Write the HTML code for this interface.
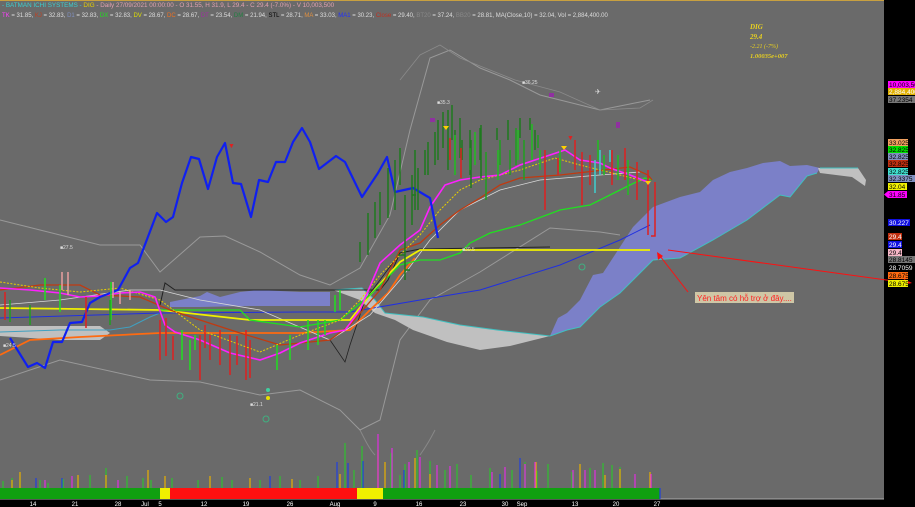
<!DOCTYPE html>
<html><head><meta charset="utf-8"><style>
html,body{margin:0;padding:0;background:#6a6a6a;width:915px;height:507px;overflow:hidden}
svg{display:block;font-family:"Liberation Sans",sans-serif}
</style></head><body>
<svg width="915" height="507" viewBox="0 0 915 507" xmlns="http://www.w3.org/2000/svg">
<rect width="915" height="507" fill="#6a6a6a"/>
<line x1="0" y1="0.5" x2="884" y2="0.5" stroke="#c8a040" stroke-width="1"/>
<rect x="884" y="0" width="31" height="507" fill="#000"/>
<rect x="0" y="499" width="884" height="8" fill="#000"/>
<line x1="0" y1="499" x2="884" y2="499" stroke="#aaa" stroke-width="1"/>

<text x="2" y="7" font-size="6.3"><tspan fill="#3ad0d0">- BATMAN  ICHI SYSTEMS - </tspan><tspan fill="#e8d000">DIG</tspan><tspan fill="#e0a0b0"> - Daily 27/09/2021 00:00:00 - O 31.55, H 31.9, L 29.4 - C 29.4 (-7.0%) - V 10,003,500</tspan></text>
<text x="2" y="17" font-size="6"><tspan fill="#ff40ff">TK</tspan><tspan fill="#ddd"> = 31.85, </tspan><tspan fill="#c04020">KJ</tspan><tspan fill="#ddd"> = 32.83, </tspan><tspan fill="#8090c0">D1</tspan><tspan fill="#ddd"> = 32.83, </tspan><tspan fill="#20e020">DX</tspan><tspan fill="#ddd"> = 32.83, </tspan><tspan fill="#e0e000">DV</tspan><tspan fill="#ddd"> = 28.67, </tspan><tspan fill="#f07020">DC</tspan><tspan fill="#ddd"> = 28.67, </tspan><tspan fill="#a030a0">DT</tspan><tspan fill="#ddd"> = 23.54, </tspan><tspan fill="#208040">DM</tspan><tspan fill="#ddd"> = 21.94, </tspan><tspan fill="#000">STL</tspan><tspan fill="#ddd"> = 28.71, </tspan><tspan fill="#e09040">MA</tspan><tspan fill="#ddd"> = 33.03, </tspan><tspan fill="#2030ff">MA1</tspan><tspan fill="#ddd"> = 30.23, </tspan><tspan fill="#c03020">Close</tspan><tspan fill="#ddd"> = 29.40, </tspan><tspan fill="#888">BT20</tspan><tspan fill="#ddd"> = 37.24, </tspan><tspan fill="#888">BB20</tspan><tspan fill="#ddd"> = 28.81, MA(Close,10) = 32.04, Vol = 2,884,400.00</tspan></text>

<g font-family="Liberation Serif,serif" font-style="italic" font-weight="bold" font-size="7" fill="#e8d020">
<text x="750" y="29">DIG</text><text x="750" y="39">29.4</text>
<text x="750" y="48" font-weight="normal" font-size="6">-2.21 (-7%)</text><text x="750" y="58" font-size="6.5">1.00035e+007</text></g>

<rect x="0" y="488" width="660" height="11" fill="#10a010"/>
<rect x="167" y="488" width="190" height="11" fill="#ff1010"/>
<rect x="160" y="488" width="10" height="11" fill="#f0f000"/>
<rect x="357" y="488" width="26" height="11" fill="#f0f000"/>
<g stroke-width="1.2">
<path d="M3 488V481M12 488V478M20 488V479M40 488V480M48 488V483M63 488V479M78 488V481M90 488V475M106 488V468M127 488V476M143 488V478M151 488V480M172 488V478M198 488V480M222 488V477M232 488V480M260 488V480M280 488V476M300 488V480M318 488V476M345 488V443M354 488V470M362 488V446M391 488V453M400 488V475M405 488V464M417 488V450M430 488V461M445 488V470M457 488V464M471 488V475M490 488V468M512 488V470M525 488V462M537 488V471M548 488V464M572 488V472M590 488V468M603 488V463M612 488V465M620 488V467" stroke="#30c030"/>
<path d="M12 488V480M20 488V472M78 488V475M106 488V475M148 488V470M165 488V476M210 488V476M250 488V478M292 488V479M340 488V474M378 488V450M385 488V462M415 488V458M430 488V474M536 488V462M580 488V464M605 488V475M620 488V469M650 488V472" stroke="#e8b000"/>
<path d="M36 488V478M62 488V478M270 488V476M337 488V462M348 488V463M363 488V461M404 488V470M500 488V474M520 488V458M660 488V499" stroke="#2040e0"/>
<path d="M45 488V480M72 488V476M118 488V480M378 488V434M392 488V448M409 488V462M420 488V457M437 488V465M450 488V466M492 488V472M505 488V467M525 488V464M535 488V462M573 488V470M585 488V470M595 488V470M635 488V474M651 488V474" stroke="#e030e0"/>
</g>
<path d="M360 430C365 440 370 450 375 455M435 430C430 440 425 448 420 455" stroke="#888" fill="none"/>

<g fill="#fff" font-size="6" text-anchor="middle">
<text x="33" y="506">14</text><text x="75" y="506">21</text><text x="118" y="506">28</text><text x="145" y="506">Jul</text><text x="160" y="506">5</text><text x="204" y="506">12</text><text x="246" y="506">19</text><text x="290" y="506">26</text><text x="335" y="506">Aug</text><text x="375" y="506">9</text><text x="419" y="506">16</text><text x="463" y="506">23</text><text x="505" y="506">30</text><text x="522" y="506">Sep</text><text x="575" y="506">13</text><text x="616" y="506">20</text><text x="657" y="506">27</text>
</g>

<path d="M0 220L40 230L100 245L140 245L160 272L200 237L225 236L260 252L300 275L330 285L360 268L390 215L410 130L430 58L450 50L480 68L510 80L540 95L560 100L600 110L630 104L650 100" fill="none" stroke="#999" stroke-width="1"/>
<path d="M0 380L60 360L150 380L200 382L260 395L300 390L340 410L360 430L380 420L400 340L430 300L480 272L550 228L600 232L620 235" fill="none" stroke="#999" stroke-width="1"/>
<path d="M400 80L420 55L440 45L460 58L490 70L515 80L560 92L600 110L640 108L653 100" fill="none" stroke="#8a8a8a" stroke-width="0.8"/>

<polygon points="170,302 200,296 207,292 220,297 240,292 258,290 280,291 300,292 330,292 330,306 300,306 250,306 200,307 170,307" fill="#7b80c8"/>
<polygon points="0,326 100,326 110,333 100,340 60,340 0,336" fill="#c0c0c0"/>
<polygon points="333,290 362,288 375,300 385,313 423,317 460,325 497,330 550,336 510,346 480,350 447,342 413,330 395,320 375,313 360,300" fill="#c0c0c0"/>
<polyline points="333,290 362,288 375,300 385,313 423,317 460,325 497,330 550,336" fill="none" stroke="#40c0c0" stroke-width="1"/>
<polygon points="550,336 558,318 567,313 580,300 593,275 603,273 620,247 633,227 653,207 680,197 700,192 713,180 730,172 747,168 763,163 780,161 790,166 807,165 820,168 817,173 807,176 790,197 780,195 747,220 730,230 713,240 680,258 653,260 633,280 620,293 600,307 580,327 567,330" fill="#7b80c8"/>
<polyline points="550,336 567,330 580,327 600,307 620,293 633,280 653,260 680,258 713,240 730,230 747,220 780,195 790,197 807,176 817,173" fill="none" stroke="#40c0c0" stroke-width="1"/>
<polygon points="818,168 858,168 866,180 865,186 852,177 820,173" fill="#c0c0c0"/>
<line x1="820" y1="168" x2="858" y2="168" stroke="#40c0c0"/>
<polyline points="0,332 60,330 110,330 130,327 150,317 160,313" fill="none" stroke="#40a0c0" stroke-width="1"/>

<polyline points="0,318 160,313 300,312 350,312 420,300 480,290 560,265 620,240 650,225" fill="none" stroke="#2030e0" stroke-width="1"/>
<polyline points="160,305 165,283 175,290 380,290 388,280 400,253 420,249 550,247" fill="none" stroke="#222" stroke-width="1"/>
<polyline points="330,340 345,362 350,345 365,300 395,260" fill="none" stroke="#222" stroke-width="0.8"/>
<polyline points="0,355 30,340 80,337 160,333 300,333 350,330 370,310 388,293 400,275 415,258" fill="none" stroke="#ff6a10" stroke-width="1.8"/>
<polyline points="0,305 60,300 130,290 160,290 200,300 260,310 330,340 370,315 400,280 430,240 460,210 500,190 540,180 600,175 640,172" fill="none" stroke="#d8d8d8" stroke-width="0.8"/>
<polyline points="0,308 160,310 250,320 350,320 370,295 400,262 420,250 650,250" fill="none" stroke="#f0f000" stroke-width="1.8"/>
<polyline points="160,310 240,310 250,320 300,327 340,320 370,295 400,265 420,260 440,260 460,253 470,243 490,233 520,225 560,210 590,205 610,195 630,185 645,178 652,180" fill="none" stroke="#20e020" stroke-width="1.3"/>
<polyline points="0,290 40,285 80,285 100,295 140,297 170,310 200,320 240,333 280,345 330,340 350,325 380,290 400,250 420,243 440,225 460,210 480,198 500,185 520,178 560,175 630,167 648,175 652,180" fill="none" stroke="#c03a10" stroke-width="1.3"/>
<polyline points="0,282 40,288 80,292 120,288 160,300 200,330 260,352 300,335 340,320 360,300 380,275 400,255 420,235 440,210 460,190 480,180 520,170 555,158 580,165 620,175 648,182" fill="none" stroke="#e8d000" stroke-width="1" stroke-dasharray="2,1.5"/>
<polyline points="0,288 30,290 60,293 80,297 100,296 120,293 140,292 155,297 165,325 175,332 200,340 230,353 260,360 280,353 300,343 330,333 345,330 360,310 380,263 400,245 420,230 430,207 445,185 460,180 480,177 500,175 520,165 550,155 565,150 580,160 600,163 610,168 630,175 650,183" fill="none" stroke="#ff20ff" stroke-width="1.6"/>

<polyline points="10,338 28,367 37,363 45,368 53,342 62,342 70,323 82,322 90,303 100,297 118,290 130,268 138,263 157,213 166,222 173,217 182,183 191,157 199,159 208,189 217,157 225,143 233,183 241,184 251,217 259,180 268,182 276,162 285,162 293,142 302,128 310,142 319,169 336,156 345,162 362,197 378,173 387,157 395,192 413,188 430,198 438,238" fill="none" stroke="#1020f0" stroke-width="2.2" stroke-linejoin="round"/>

<g stroke-width="1.5" fill="none">
<path d="M405 195V280M398 255H405M405 270H410M412 175V225M412 195H416M418 168V210M428 142V175M435 132V165M443 112V148M452 105V140M460 118V158M471 140V188M481 125V178M497 128V140M508 120V140" stroke="#1e7a1e"/>
<path d="M360 242V262M368 213V255M375 202V238M380 192V225M388 168V218M395 160V210M400 148V185M415 150V210M425 150V175M438 120V160M448 110V170M455 130V160M462 140V160M470 130V175M480 128V160M520 118V138M530 118V130M535 130V150" stroke="#1e7a1e"/>
<path d="M470 148V170M486 152V200M500 140V165M510 150V175M516 128V165M524 140V180M538 135V148" stroke="#20a020"/>
<path d="M455 135V175M475 132V165M498 150V180M518 130V160M532 124V160M540 150V170M560 150V172" stroke="#20c020"/>
<path d="M461 148V178M450 138V160" stroke="#e02020"/>
<path d="M545 150V210M558 158V175M575 140V170M582 152V205M590 155V185M612 150V185M625 148V180M637 162V200M648 170V235M655 182V236H651" stroke="#e02020"/>
<path d="M595 160V193M600 150V175M610 150V162" stroke="#40d0d0"/>
<path d="M598 140V160M604 155V175M618 155V180M628 160V195" stroke="#20c020"/>
<path d="M5 292V320M86 297V328M160 320V360M166 318V356M173 336V360M200 335V380M210 335V360M220 330V365M230 335V375M237 336V365M246 330V380M250 340V378M205 325V348" stroke="#e02020"/>
<path d="M45 278V300M60 285V312M111 282V320M182 330V360M190 340V370M195 335V350M277 345V370M290 335V360M308 320V350M318 320V345M325 320V335M335 295V312M340 290V310" stroke="#20e020"/>
<path d="M62 272V290M68 272V295M113 282V298M120 292V304M130 290V300" stroke="#e8a0a0"/>
<path d="M10 300V322M30 305V325M110 300V325" stroke="#20a020"/>
</g>
<g font-size="5" fill="#ddd">
<text x="60" y="249">■27.5</text><text x="3" y="347">■24.5</text><text x="250" y="406">■21.1</text>
<text x="437" y="104">■35.3</text><text x="522" y="84">■36.25</text><text x="462" y="251">■30.5</text>
</g>
<circle cx="268" cy="390" r="2" fill="#40d0a0"/>
<circle cx="582" cy="267" r="3" fill="none" stroke="#40b080"/>
<circle cx="180" cy="396" r="3" fill="none" stroke="#40b080"/>
<circle cx="266" cy="419" r="3" fill="none" stroke="#40b080"/>
<circle cx="268" cy="398" r="2" fill="#e8e000"/>
<g fill="#ffd000"><path d="M446 130l-3-4h6z"/><path d="M564 150l-3-4h6z"/><path d="M648 185l-3-4h6z"/></g>
<g fill="#9030a0"><path d="M430 118h5v4h-5zM549 93h5v4h-5zM616 122h4v6h-4z"/></g>
<text x="567" y="140" fill="#e02020" font-size="7">▼</text>
<text x="228" y="148" fill="#e02020" font-size="7">▼</text>
<text x="595" y="94" fill="#ddd" font-size="7">✈</text>

<line x1="668" y1="250" x2="908" y2="283" stroke="#ff1010" stroke-width="1"/>
<path d="M912 283l-8 -4 -1 6z" fill="#ff1010"/>
<line x1="688" y1="292" x2="660" y2="256" stroke="#ff1010" stroke-width="1"/>
<path d="M657 252l1 8 5-4z" fill="#ff1010"/>
<rect x="695" y="292" width="99" height="11" fill="#cfc7a6"/>
<text x="697" y="301" fill="#ff2020" font-size="8">Yên tâm có hỗ trợ ở đây....</text>

<g font-size="6.5">
<rect x="888" y="81" width="27" height="7" fill="#ff00ff"/><text x="889" y="87" fill="#000">10,003,50</text>
<rect x="888" y="88" width="27" height="7" fill="#e0b000"/><text x="889" y="94" fill="#fff">2,884,400</text>
<rect x="888" y="96" width="27" height="7" fill="#777"/><text x="889" y="102" fill="#000">37.2354</text>
<rect x="888" y="139" width="20" height="7" fill="#f0a060"/><text x="889" y="145" fill="#000">33.025</text>
<rect x="888" y="146" width="20" height="7" fill="#00e000"/><text x="889" y="152" fill="#000">32.825</text>
<rect x="888" y="153" width="20" height="7" fill="#8090c0"/><text x="889" y="159" fill="#000">32.825</text>
<rect x="888" y="160" width="20" height="7" fill="#c03010"/><text x="889" y="166" fill="#000">32.825</text>
<rect x="888" y="168" width="20" height="7" fill="#40e0d0"/><text x="889" y="174" fill="#000">32.825</text>
<rect x="888" y="175" width="27" height="7" fill="#8090c0"/><text x="889" y="181" fill="#000">32.3375</text>
<rect x="888" y="183" width="19" height="7" fill="#f0f000"/><text x="889" y="189" fill="#000">32.04</text>
<rect x="888" y="191" width="19" height="7" fill="#ff00ff"/><path d="M888 191l-4 3.5 4 3.5z" fill="#ff00ff"/><text x="889" y="197" fill="#000">31.85</text>
<rect x="888" y="219" width="22" height="7" fill="#1010e0"/><text x="889" y="225" fill="#fff">30.227</text>
<rect x="888" y="233" width="14" height="7" fill="#c03010"/><text x="889" y="239" fill="#fff">29.4</text>
<rect x="888" y="241" width="14" height="7" fill="#1010e0"/><text x="889" y="247" fill="#fff">29.4</text>
<rect x="888" y="249" width="14" height="7" fill="#f8b8c8"/><text x="889" y="255" fill="#000">29.4</text>
<rect x="888" y="256" width="27" height="7" fill="#777"/><text x="889" y="262" fill="#000">28.8145</text>
<text x="889" y="270" fill="#fff">28.7059</text>
<rect x="888" y="272" width="20" height="7" fill="#ff6a10"/><text x="889" y="278" fill="#000">28.675</text>
<rect x="888" y="280" width="20" height="7" fill="#f0f000"/><text x="889" y="286" fill="#000">28.675</text>
</g>
</svg>
</body></html>
